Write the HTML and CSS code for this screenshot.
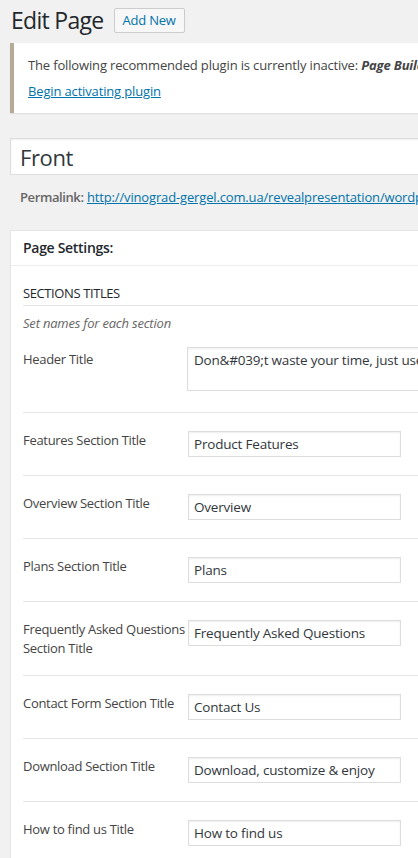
FILE: index.html
```html
<!DOCTYPE html>
<html lang="en">
<head>
<meta charset="utf-8">
<title>Edit Page</title>
<link rel="stylesheet" href="styles.css">
</head>
<body>
<div class="wrap">
  <div class="page-head">
    <h1 class="page-title">Edit Page</h1>
    <a class="add-new" href="#">Add New</a>
  </div>

  <div class="notice">
    <p class="notice-text">The following recommended plugin is currently inactive: <strong><em>Page Builder by SiteOrigin</em></strong>.</p>
    <p class="notice-link"><a href="#">Begin activating plugin</a></p>
  </div>

  <div class="title-box">
    <input class="title-input" type="text" value="Front">
  </div>

  <div class="permalink">
    <strong>Permalink:</strong> <a href="#">http://vinograd-gergel.com.ua/revealpresentation/wordpress/front/</a>
  </div>

  <div class="postbox">
    <h2 class="postbox-head">Page Settings:</h2>
    <div class="postbox-body">
      <h3 class="section-head">SECTIONS TITLES</h3>
      <p class="section-desc">Set names for each section</p>

      <div class="field field-area">
        <label class="field-label">Header Title</label>
        <textarea class="field-textarea">Don&amp;#039;t waste your time, just use our theme</textarea>
      </div>
      <div class="field">
        <label class="field-label">Features Section Title</label>
        <input class="field-input" type="text" value="Product Features">
      </div>
      <div class="field">
        <label class="field-label">Overview Section Title</label>
        <input class="field-input" type="text" value="Overview">
      </div>
      <div class="field">
        <label class="field-label">Plans Section Title</label>
        <input class="field-input" type="text" value="Plans">
      </div>
      <div class="field">
        <label class="field-label">Frequently Asked Questions Section Title</label>
        <input class="field-input" type="text" value="Frequently Asked Questions">
      </div>
      <div class="field">
        <label class="field-label">Contact Form Section Title</label>
        <input class="field-input" type="text" value="Contact Us">
      </div>
      <div class="field">
        <label class="field-label">Download Section Title</label>
        <input class="field-input" type="text" value="Download, customize &amp; enjoy">
      </div>
      <div class="field">
        <label class="field-label">How to find us Title</label>
        <input class="field-input" type="text" value="How to find us">
      </div>
    </div>
  </div>
</div>
</body>
</html>
```

FILE: styles.css
```css
html, body {
  margin: 0;
  padding: 0;
}
body {
  background: #f1f1f1;
  color: #444;
  font-family: "Open Sans", "Noto Sans", sans-serif;
  font-size: 13px;
  line-height: 1.4;
  overflow: hidden;
}
.wrap {
  width: 720px;
  padding-left: 10px;
}
.page-head {
  display: flex;
  align-items: center;
  gap: 10px;
  padding-top: 8px;
  height: 25px;
}
.page-title {
  margin: 0;
  font-size: 23px;
  font-weight: 400;
  line-height: 25px;
  letter-spacing: -0.7px;
  color: #23282d;
  padding-left: 1px;
}
.add-new {
  display: inline-block;
  box-sizing: border-box;
  height: 25px;
  width: 71px;
  line-height: 23px;
  text-align: center;
  border: 1px solid #ccc;
  border-radius: 2px;
  background: #f7f7f7;
  color: #0073aa;
  font-size: 13px;
  font-weight: 500;
  letter-spacing: -0.2px;
  text-decoration: none;
}
.notice {
  margin-top: 10px;
  background: #fff;
  border-left: 4px solid #b5ab96;
  box-shadow: 0 1px 1px rgba(0,0,0,.08);
  padding: 12px 14px 10px;
  height: 48px;
}
.notice p {
  margin: 0;
  line-height: 20px;
  color: #444;
  letter-spacing: -0.15px;
}
.notice-text {
  margin-bottom: 6px !important;
}
.notice-link a {
  color: #0073aa;
  text-decoration: underline;
}
.title-box {
  margin-top: 25px;
}
.title-input {
  display: block;
  box-sizing: border-box;
  width: 100%;
  height: 37px;
  margin: 0;
  padding: 0 9px;
  border: 1px solid #ddd;
  box-shadow: inset 0 1px 2px rgba(0,0,0,.07);
  background: #fff;
  font-family: inherit;
  font-size: 22px;
  letter-spacing: -0.4px;
  color: #32373c;
  outline: none;
}
.permalink {
  padding: 12px 0 0 10px;
  line-height: 20px;
  color: #666;
}
.permalink strong {
  font-weight: 600;
  letter-spacing: -0.4px;
}
.permalink a {
  color: #0073aa;
  text-decoration: underline;
  letter-spacing: -0.15px;
}
.postbox {
  margin-top: 23px;
  background: #fff;
  border: 1px solid #e5e5e5;
  box-shadow: 0 1px 1px rgba(0,0,0,.04);
}
.postbox-head {
  margin: 0;
  padding: 0 12px;
  height: 34px;
  line-height: 34px;
  font-size: 14px;
  font-weight: 600;
  letter-spacing: -0.3px;
  color: #23282d;
  border-bottom: 1px solid #eee;
}
.postbox-body {
  padding: 0 0 0 12px;
}
.section-head {
  margin: 0;
  padding: 17px 0 2px;
  font-size: 13px;
  font-weight: 400;
  line-height: 20px;
  letter-spacing: -0.4px;
  color: #23282d;
  border-bottom: 1px solid #e5e5e5;
}
.section-desc {
  margin: 7px 0 0;
  line-height: 20px;
  font-style: italic;
  letter-spacing: -0.2px;
  color: #666;
}
.field {
  display: flex;
  align-items: flex-start;
  padding: 18px 0;
  border-bottom: 1px solid #e5e5e5;
}
.field:last-child {
  border-bottom: none;
}
.field-area {
  padding: 14px 0 21px;
}
.field-area .field-label {
  padding-top: 3px;
}
.field-label {
  width: 165px;
  flex: none;
  line-height: 18.5px;
  letter-spacing: -0.3px;
  color: #444;
}
.field-input {
  box-sizing: border-box;
  width: 213px;
  height: 26px;
  margin: 0;
  padding: 0 5px;
  border: 1px solid #ddd;
  box-shadow: inset 0 1px 2px rgba(0,0,0,.07);
  background: #fff;
  font-family: inherit;
  font-size: 13.5px;
  letter-spacing: -0.2px;
  color: #32373c;
  outline: none;
}
.field-textarea {
  box-sizing: border-box;
  width: 400px;
  height: 44px;
  margin: 0 0 0 -1px;
  padding: 2px 6px;
  border: 1px solid #ddd;
  box-shadow: inset 0 1px 2px rgba(0,0,0,.07);
  background: #fff;
  font-family: inherit;
  font-size: 13.5px;
  line-height: 20px;
  letter-spacing: -0.2px;
  color: #32373c;
  resize: none;
  outline: none;
  overflow: hidden;
}
```
